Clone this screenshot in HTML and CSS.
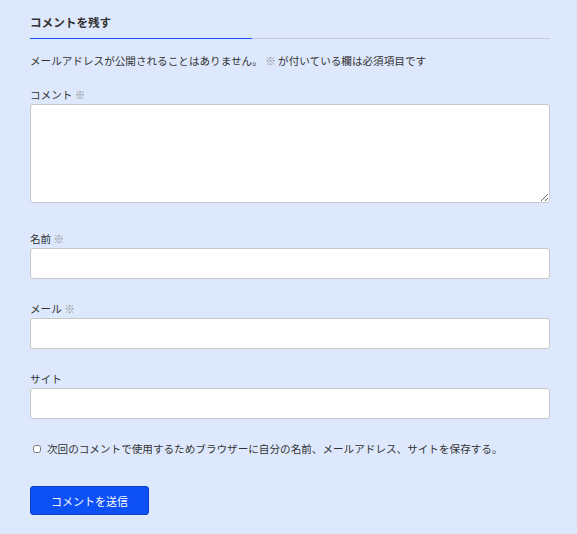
FILE: index.html
```html
<!DOCTYPE html>
<html lang="ja">
    <head>
        <meta charset="UTF-8" />
        <meta name="viewport" content="width=device-width, initial-scale=1.0" />
        <title>コメントを残す</title>
        <link rel="stylesheet" href="styles.css">
    </head>
    <body>
        <div class="comment-respond">
            <h3 class="comment-title"><span>コメントを残す</span></h3>

            <form class="comment-form">
                <p class="comment-notes">
                    メールアドレスが公開されることはありません。 <span class="required">※</span> が付いている欄は必須項目です
                </p>

                <p class="field field-comment">
                    <label for="comment">コメント <span class="required">※</span></label>
                    <textarea id="comment" name="comment"></textarea>
                </p>

                <p class="field">
                    <label for="author">名前 <span class="required">※</span></label>
                    <input type="text" id="author" name="author" />
                </p>

                <p class="field">
                    <label for="email">メール <span class="required">※</span></label>
                    <input type="text" id="email" name="email" />
                </p>

                <p class="field">
                    <label for="url">サイト</label>
                    <input type="text" id="url" name="url" />
                </p>

                <p class="cookies">
                    <input type="checkbox" id="cookies" name="cookies" />
                    <label for="cookies">次回のコメントで使用するためブラウザーに自分の名前、メールアドレス、サイトを保存する。</label>
                </p>

                <p class="form-submit">
                    <button type="submit">コメントを送信</button>
                </p>
            </form>
        </div>
    </body>
</html>
```

FILE: styles.css
```css
body {
    font-family: 'Noto Sans CJK JP', 'Noto Sans', sans-serif;
    background-color: #dde8fc;
    color: #333;
    margin: 0;
    padding: 0;
}
.comment-respond {
    width: 520px;
    margin: 0 0 0 30px;
    padding-top: 12px;
}
.comment-title {
    margin: 0;
    font-size: 11.6px;
    font-weight: bold;
    line-height: 20px;
    padding-bottom: 6px;
    border-bottom: 1px solid #c4cde0;
    position: relative;
}
.comment-title::after {
    content: '';
    position: absolute;
    left: 0;
    bottom: -1px;
    width: 222px;
    height: 1px;
    background-color: #1a4ff7;
}
.comment-form p {
    margin: 0;
}
.comment-notes {
    font-size: 10.6px;
    line-height: 16px;
    margin-top: 14px !important;
}
.required {
    color: #888;
}
.field {
    margin-top: 22px !important;
}
.field label {
    display: block;
    font-size: 10.6px;
    line-height: 16px;
    margin-bottom: 1px;
}
.field-comment {
    margin-top: 18px !important;
}
textarea,
input[type='text'] {
    display: block;
    box-sizing: border-box;
    width: 520px;
    background-color: white;
    border: 1px solid #c8c8c8;
    border-radius: 3px;
    font-family: inherit;
    font-size: 12px;
}
textarea {
    height: 99px;
    margin-bottom: 28px;
    resize: vertical;
}
input[type='text'] {
    height: 31px;
}
.cookies {
    display: flex;
    align-items: center;
    font-size: 10.6px;
    line-height: 16px;
    margin-top: 22px !important;
    padding-left: 3px;
}
.cookies input {
    width: 8px;
    height: 8px;
    margin: 0 6px 0 0;
}
.form-submit {
    margin-top: 29px !important;
}
button {
    width: 119px;
    height: 29px;
    background-color: #0d50f5;
    color: white;
    border: 1px solid #0a40c8;
    border-radius: 3px;
    font-family: inherit;
    font-size: 11px;
    cursor: pointer;
}
```
